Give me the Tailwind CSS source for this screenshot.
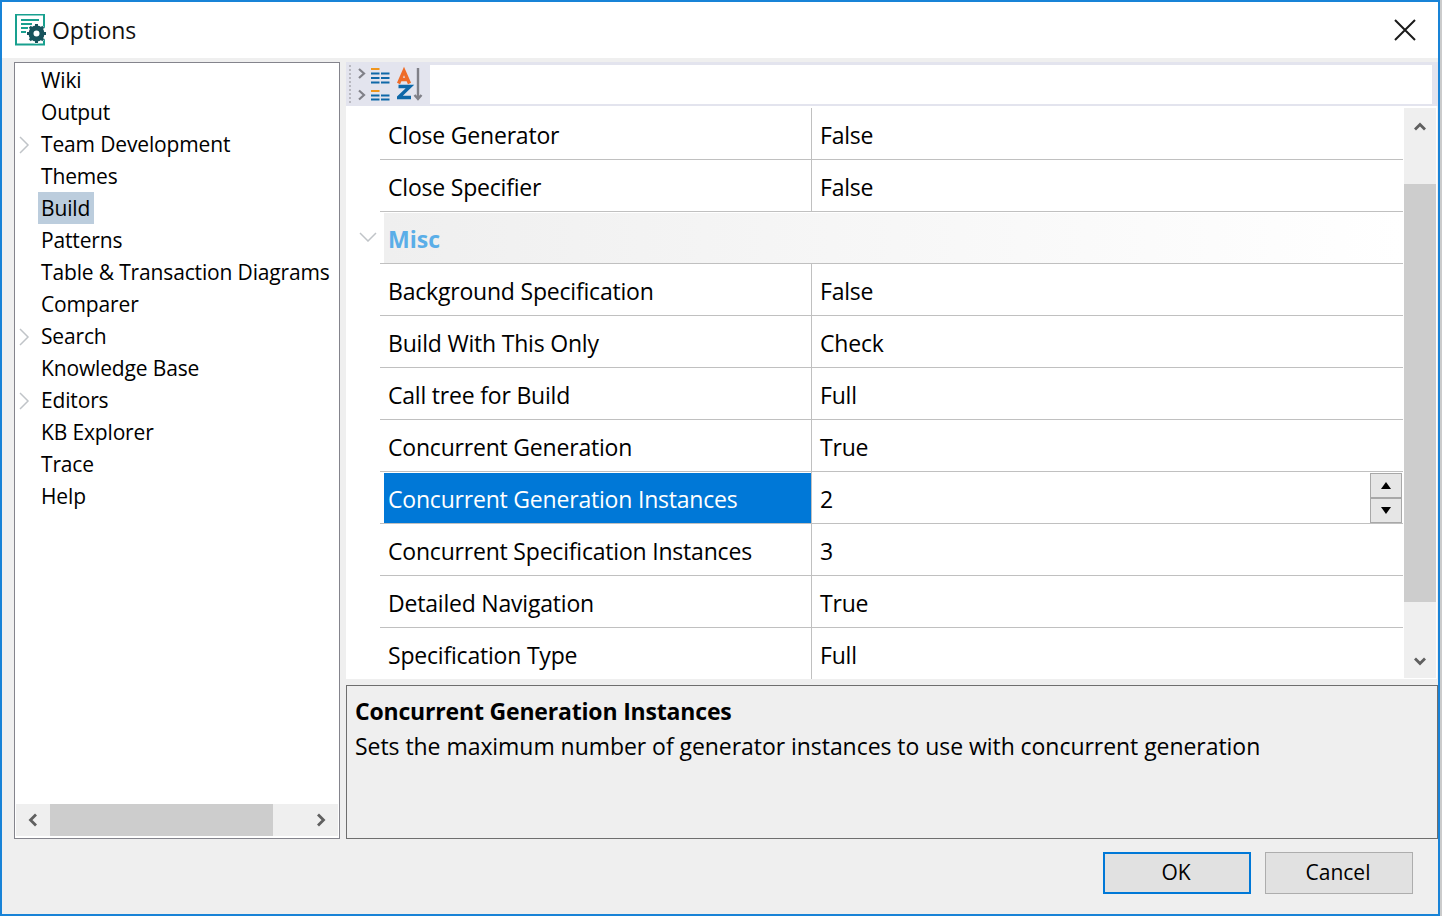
<!DOCTYPE html>
<html lang="en">

<head>
    <meta charset="UTF-8">
    <title>Options</title>
    <script src="https://cdn.jsdelivr.net/npm/@tailwindcss/browser@4"></script>
</head>

<body class="bg-[#cbcbcb]">
    <!-- Dialog -->
    <div class="w-[1440px] h-[916px] border-2 border-[#1883d7] bg-[#efefef] flex flex-col overflow-hidden text-black font-['Open_Sans','Noto_Sans',sans-serif]">

        <!-- Title bar -->
        <header class="h-[56px] shrink-0 bg-white flex items-center pl-[13px] pr-[22px]">
            <svg class="w-[32px] h-[32px] shrink-0" viewBox="0 0 32 32">
                <rect x="1" y="0.500" width="28" height="30" fill="#fff" stroke="#18a08f" stroke-width="2" />
                <path d="M6 6h18M6 10h11M6 14h7M6 18h5" stroke="#18a08f" stroke-width="1.800" />
                <circle cx="21.500" cy="19.500" r="10" fill="#fff" />
                <circle cx="21.500" cy="19.500" r="5.500" fill="none" stroke="#17535c" stroke-width="5" />
                <path d="M21.500 10v3M21.500 26v3M12 19.500h3M28 19.500h3M14.800 12.800l2.200 2.200M26 24l2.200 2.200M14.800 26.200l2.200-2.200M26 15l2.200-2.200" stroke="#17535c" stroke-width="3" />
            </svg>
            <span class="ml-[5px] text-[23px] tracking-[-0.1px] text-[#111]">Options</span>
            <svg class="ml-auto w-[22px] h-[22px]" viewBox="0 0 22 22">
                <path d="M1 1l20 20M21 1L1 21" stroke="#1a1a1a" stroke-width="2" fill="none" />
            </svg>
        </header>

        <!-- Main area -->
        <div class="flex-1 min-h-0 flex pt-[4px] pl-[12px] gap-[6px]">

            <!-- Tree -->
            <aside class="w-[326px] h-[777px] shrink-0 border border-[#84848c] bg-white flex flex-col text-[21px] tracking-[-0.15px]">
                <ul class="flex-1 pl-[23px] pt-[1px] overflow-hidden">
                    <li class="h-[32px] pt-[1px] flex items-center relative"><span class="px-[3px]">Wiki</span></li>
                    <li class="h-[32px] pt-[1px] flex items-center relative"><span class="px-[3px]">Output</span></li>
                    <li class="h-[32px] pt-[1px] flex items-center relative">
                        <svg class="absolute left-[-20px] w-[12px] h-[18px]" viewBox="0 0 12 18"><path d="M2 1l8 8-8 8" fill="none" stroke="#c0c4c8" stroke-width="1.500" /></svg>
                        <span class="px-[3px]">Team Development</span>
                    </li>
                    <li class="h-[32px] pt-[1px] flex items-center relative"><span class="px-[3px]">Themes</span></li>
                    <li class="h-[32px] flex items-center relative"><span class="pl-[3px] pr-[4px] bg-[#bccddd] h-[32px] leading-[33px]">Build</span></li>
                    <li class="h-[32px] pt-[1px] flex items-center relative"><span class="px-[3px]">Patterns</span></li>
                    <li class="h-[32px] pt-[1px] flex items-center relative"><span class="px-[3px] whitespace-nowrap">Table &amp; Transaction Diagrams</span></li>
                    <li class="h-[32px] pt-[1px] flex items-center relative"><span class="px-[3px]">Comparer</span></li>
                    <li class="h-[32px] pt-[1px] flex items-center relative">
                        <svg class="absolute left-[-20px] w-[12px] h-[18px]" viewBox="0 0 12 18"><path d="M2 1l8 8-8 8" fill="none" stroke="#c0c4c8" stroke-width="1.500" /></svg>
                        <span class="px-[3px]">Search</span>
                    </li>
                    <li class="h-[32px] pt-[1px] flex items-center relative"><span class="px-[3px]">Knowledge Base</span></li>
                    <li class="h-[32px] pt-[1px] flex items-center relative">
                        <svg class="absolute left-[-20px] w-[12px] h-[18px]" viewBox="0 0 12 18"><path d="M2 1l8 8-8 8" fill="none" stroke="#c0c4c8" stroke-width="1.500" /></svg>
                        <span class="px-[3px]">Editors</span>
                    </li>
                    <li class="h-[32px] pt-[1px] flex items-center relative"><span class="px-[3px]">KB Explorer</span></li>
                    <li class="h-[32px] pt-[1px] flex items-center relative"><span class="px-[3px]">Trace</span></li>
                    <li class="h-[32px] pt-[1px] flex items-center relative"><span class="px-[3px]">Help</span></li>
                </ul>
                <!-- Horizontal scrollbar -->
                <div class="h-[32px] mx-[1px] mb-[2px] bg-[#efefef] flex items-center shrink-0">
                    <div class="w-[34px] flex justify-center">
                        <svg class="w-[10px] h-[14px]" viewBox="0 0 10 14"><path d="M8 1.500L2.500 7 8 12.500" fill="none" stroke="#606060" stroke-width="2.800" /></svg>
                    </div>
                    <div class="w-[223px] h-full bg-[#cdcdcd]"></div>
                    <div class="flex-1 flex justify-end pr-[12px]">
                        <svg class="w-[10px] h-[14px]" viewBox="0 0 10 14"><path d="M2 1.500L7.500 7 2 12.500" fill="none" stroke="#606060" stroke-width="2.800" /></svg>
                    </div>
                </div>
            </aside>

            <!-- Right column -->
            <section class="w-[1092px] h-[777px] shrink-0 flex flex-col">

                <!-- Toolbar -->
                <div class="h-[44px] shrink-0 bg-[#e3e4ee] flex items-center pl-[3px] pr-[6px]">
                    <div class="w-[2px] h-[38px] border-l-2 border-dotted border-[#b8b8c0]"></div>
                    <svg class="ml-[6px] w-[34px] h-[36px] shrink-0" viewBox="0 0 34 36">
                        <path d="M2 3l5 4.500L2 12M2 24.500l5 4.500-5 4.500" fill="none" stroke="#808088" stroke-width="2.200" />
                        <path d="M14 3h8.500M14 25h8.500" stroke="#f0961e" stroke-width="2" />
                        <path d="M14 7.500h8.500M24 7.500h8.500M14 12h8.500M24 12h8.500M14 16.500h8.500M24 16.500h8.500M14 29.500h8.500M24 29.500h8.500M14 33.500h8.500M24 33.500h8.500" stroke="#0f68a8" stroke-width="2" />
                    </svg>
                    <svg class="ml-[6px] w-[28px] h-[36px] shrink-0" viewBox="0 0 28 36">
                        <path d="M1.500 17.500L7 5l5.500 12.500M3.500 13.500h7" fill="none" stroke="#ee6c28" stroke-width="3.400" />
                        <path d="M1.500 20.500h11.500L1.500 31.500H14" fill="none" stroke="#0f68a8" stroke-width="3.400" />
                        <path d="M21 2v31M17.500 29l3.500 4 3.500-4" fill="none" stroke="#808088" stroke-width="2.400" />
                    </svg>
                    <div class="ml-[5px] flex-1 h-[39px] bg-white"></div>
                </div>

                <!-- Property grid -->
                <div class="h-[573px] shrink-0 mr-[1px] pt-[2px] bg-white flex text-[23px] tracking-[-0.2px] overflow-hidden">
                    <div class="flex-1 min-w-0 pl-[34px]">
                        <div class="h-[52px] flex border-b border-[#c0c0c0]">
                            <div class="w-[432px] pl-[8px] pt-[4px] flex items-center border-r border-[#c0c0c0]">Close Generator</div>
                            <div class="pl-[8px] pt-[4px] flex items-center">False</div>
                        </div>
                        <div class="h-[52px] flex border-b border-[#c0c0c0]">
                            <div class="w-[432px] pl-[8px] pt-[4px] flex items-center border-r border-[#c0c0c0]">Close Specifier</div>
                            <div class="pl-[8px] pt-[4px] flex items-center">False</div>
                        </div>
                        <!-- Misc category -->
                        <div class="h-[52px] flex border-b border-[#c0c0c0] relative">
                            <svg class="absolute left-[-21px] top-[20px] w-[18px] h-[10px]" viewBox="0 0 18 10"><path d="M1 1l8 8 8-8" fill="none" stroke="#c0c4c8" stroke-width="1.500" /></svg>
                            <div class="flex-1 ml-[4px] mt-[1px] pl-[4px] pt-[3px] flex items-center font-bold tracking-normal text-[#5aaee8] bg-gradient-to-r from-[#efefef] to-white">Misc</div>
                        </div>
                        <div class="h-[52px] flex border-b border-[#c0c0c0]">
                            <div class="w-[432px] pl-[8px] pt-[4px] flex items-center border-r border-[#c0c0c0]">Background Specification</div>
                            <div class="pl-[8px] pt-[4px] flex items-center">False</div>
                        </div>
                        <div class="h-[52px] flex border-b border-[#c0c0c0]">
                            <div class="w-[432px] pl-[8px] pt-[4px] flex items-center border-r border-[#c0c0c0]">Build With This Only</div>
                            <div class="pl-[8px] pt-[4px] flex items-center">Check</div>
                        </div>
                        <div class="h-[52px] flex border-b border-[#c0c0c0]">
                            <div class="w-[432px] pl-[8px] pt-[4px] flex items-center border-r border-[#c0c0c0]">Call tree for Build</div>
                            <div class="pl-[8px] pt-[4px] flex items-center">Full</div>
                        </div>
                        <div class="h-[52px] flex border-b border-[#c0c0c0]">
                            <div class="w-[432px] pl-[8px] pt-[4px] flex items-center border-r border-[#c0c0c0]">Concurrent Generation</div>
                            <div class="pl-[8px] pt-[4px] flex items-center">True</div>
                        </div>
                        <!-- Selected row -->
                        <div class="h-[52px] flex border-b border-[#c0c0c0]">
                            <div class="w-[432px] pl-[4px] pt-[1px] flex items-stretch border-r border-[#c0c0c0]">
                                <div class="flex-1 pl-[4px] pt-[3px] flex items-center bg-[#0078d7] text-white whitespace-nowrap">Concurrent Generation Instances</div>
                            </div>
                            <div class="flex-1 pl-[8px] flex items-center">
                                <span class="pt-[4px]">2</span>
                                <div class="ml-auto mr-[1px] w-[32px] h-[50px] flex flex-col border border-[#a8a8a8] bg-[#e6e6e6]">
                                    <div class="flex-1 flex items-center justify-center border-b-2 border-[#a8a8a8]">
                                        <svg class="w-[10px] h-[7px]" viewBox="0 0 10 7"><path d="M5 0l5 7H0z" fill="#000" /></svg>
                                    </div>
                                    <div class="flex-1 flex items-center justify-center">
                                        <svg class="w-[10px] h-[7px]" viewBox="0 0 10 7"><path d="M5 7l5-7H0z" fill="#000" /></svg>
                                    </div>
                                </div>
                            </div>
                        </div>
                        <div class="h-[52px] flex border-b border-[#c0c0c0]">
                            <div class="w-[432px] pl-[8px] pt-[4px] flex items-center border-r border-[#c0c0c0]">Concurrent Specification Instances</div>
                            <div class="pl-[8px] pt-[4px] flex items-center">3</div>
                        </div>
                        <div class="h-[52px] flex border-b border-[#c0c0c0]">
                            <div class="w-[432px] pl-[8px] pt-[4px] flex items-center border-r border-[#c0c0c0]">Detailed Navigation</div>
                            <div class="pl-[8px] pt-[4px] flex items-center">True</div>
                        </div>
                        <div class="h-[52px] flex">
                            <div class="w-[432px] pl-[8px] pt-[2px] flex items-center border-r border-[#c0c0c0]">Specification Type</div>
                            <div class="pl-[8px] pt-[2px] flex items-center">Full</div>
                        </div>
                    </div>
                    <!-- Vertical scrollbar -->
                    <div class="w-[32px] h-[570px] shrink-0 mx-[1px] bg-[#efefef] flex flex-col">
                        <div class="h-[76px] flex justify-center pt-[14px]">
                            <svg class="w-[12px] h-[9px]" viewBox="0 0 12 9"><path d="M1 7.500l5-5 5 5" fill="none" stroke="#606060" stroke-width="2.800" /></svg>
                        </div>
                        <div class="h-[418px] bg-[#cdcdcd]"></div>
                        <div class="flex-1 flex justify-center items-end pb-[12px]">
                            <svg class="w-[12px] h-[9px]" viewBox="0 0 12 9"><path d="M1 1.500l5 5 5-5" fill="none" stroke="#606060" stroke-width="2.800" /></svg>
                        </div>
                    </div>
                </div>

                <!-- Description -->
                <div class="mt-[6px] flex-1 border border-[#6e6e6e] bg-[#efefef] pl-[8px] pt-[8px] text-[23px]">
                    <h2 class="font-bold leading-[34px] tracking-[-0.18px]">Concurrent Generation Instances</h2>
                    <p class="leading-[36px] tracking-[-0.05px]">Sets the maximum number of generator instances to use with concurrent generation</p>
                </div>
            </section>
        </div>

        <!-- Footer buttons -->
        <footer class="h-[75px] shrink-0 flex justify-end items-start gap-[14px] pr-[25px] pt-[13px] text-[21px]">
            <button class="w-[148px] h-[42px] border-2 border-[#0078d7] bg-[#e1e1e1] pr-[2px]">OK</button>
            <button class="w-[148px] h-[42px] border border-[#adadad] bg-[#e1e1e1] pr-[2px]">Cancel</button>
        </footer>
    </div>
</body>

</html>
